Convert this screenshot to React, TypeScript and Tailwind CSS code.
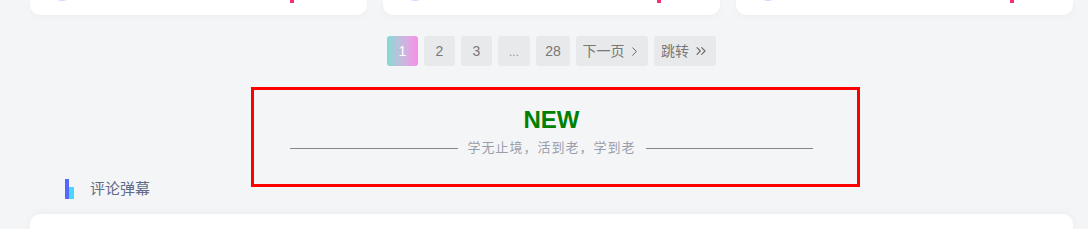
import React from "react";
import { ChevronRight, ChevronsRight } from "lucide-react";

const cards = [{ pink: 260 }, { pink: 274 }, { pink: 274 }];

function PageBtn({
  children,
  w,
  active = false,
}: {
  children: React.ReactNode;
  w: string;
  active?: boolean;
}) {
  return (
    <div
      className={
        active
          ? `${w} h-[30px] rounded-[3px] flex items-center justify-center text-[14px] text-white bg-gradient-to-r from-[#7fdad2] to-[#f88de9]`
          : `${w} h-[30px] rounded-[3px] flex items-center justify-center text-[14px] text-[#777] bg-[#e8e9ea]`
      }
    >
      {children}
    </div>
  );
}

export default function App() {
  return (
    <div className="w-[1088px] h-[229px] overflow-hidden bg-[#f4f5f7] font-['Liberation_Sans','Noto_Sans_CJK_SC',sans-serif]">
      <div className="ml-[30px] w-[1043px] flex flex-col">
        {/* top cards (cut off) */}
        <div className="grid grid-cols-3 gap-[16px]">
          {cards.map((c, i) => (
            <div
              key={i}
              className="h-[15px] bg-white rounded-b-[10px] shadow-[0_2px_6px_rgba(0,0,0,0.03)] overflow-hidden flex items-start"
            >
              <div className="ml-[18px] mt-[-27px] w-[28px] h-[28px] rounded-full bg-[#ece9ff] border border-[#d8d2ff] shrink-0" />
              <div
                className={
                  i === 0
                    ? "ml-[214px] w-[4px] h-[3px] bg-[#ff2b7b]"
                    : "ml-[228px] w-[4px] h-[3px] bg-[#ff2b7b]"
                }
              />
            </div>
          ))}
        </div>

        {/* pagination */}
        <div className="mt-[21px] flex justify-center gap-[6px]">
          <PageBtn w="w-[31px]" active>
            1
          </PageBtn>
          <PageBtn w="w-[31px]">2</PageBtn>
          <PageBtn w="w-[31px]">3</PageBtn>
          <PageBtn w="w-[32px]">
            <span className="text-[12px] mt-[2px] text-[#999]">...</span>
          </PageBtn>
          <PageBtn w="w-[34px]">28</PageBtn>
          <PageBtn w="w-[72px]">
            <span>下一页</span>
            <ChevronRight size={15} strokeWidth={1.6} className="ml-[2px] text-[#666]" />
          </PageBtn>
          <PageBtn w="w-[62px]">
            <span>跳转</span>
            <ChevronsRight size={16} strokeWidth={1.6} className="ml-[4px] text-[#666]" />
          </PageBtn>
        </div>

        {/* red box */}
        <div className="mt-[21px] ml-[221px] w-[609px] h-[100px] border-[3px] border-[#ff0000] flex flex-col pl-[36px] pr-[44px] pt-[16px]">
          <div className="text-center text-[24px] leading-[28px] font-bold text-[#008000] font-['Liberation_Sans',sans-serif]">
            NEW
          </div>
          <div className="mt-[4px] h-[20px] flex items-center">
            <div className="flex-1 h-px bg-[#85878c]" />
            <div className="mx-[10px] text-[13px] tracking-[1px] text-[#9a9eab] leading-[20px] whitespace-nowrap">
              学无止境，活到老，学到老
            </div>
            <div className="flex-1 h-px bg-[#85878c]" />
          </div>
        </div>

        {/* heading */}
        <div className="mt-[-8px] h-[20px] pl-[35px] flex items-center">
          <div className="relative w-[10px] h-[20px]">
            <div className="absolute left-0 top-0 w-[4px] h-[20px] bg-[#5468ff]" />
            <div className="absolute left-[4px] bottom-0 w-[5px] h-[12px] bg-[#4cd5ff]" />
          </div>
          <div className="ml-[15px] text-[15px] text-[#5f6b87] leading-[20px]">
            评论弹幕
          </div>
        </div>

        {/* bottom card */}
        <div className="mt-[15px] h-[40px] bg-white rounded-t-[10px] shadow-[0_-2px_8px_rgba(0,0,0,0.03)]" />
      </div>
    </div>
  );
}
